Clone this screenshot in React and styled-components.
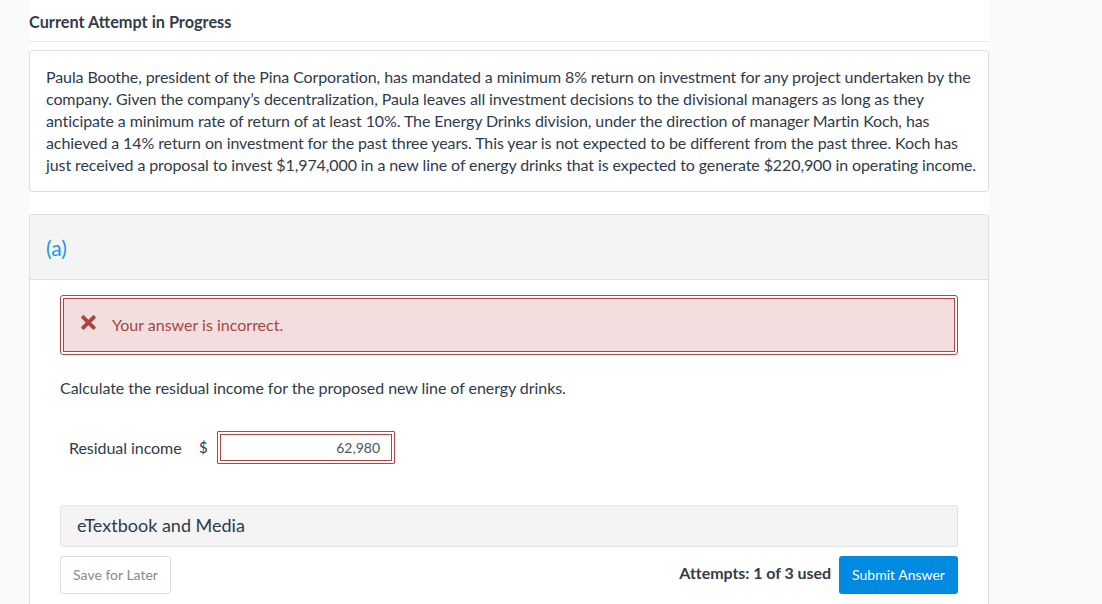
import React from "react";
import styled, { createGlobalStyle } from "styled-components";
import { FaTimes } from "react-icons/fa";

const Global = createGlobalStyle`
  html, body { margin: 0; padding: 0; background: #fafafa; height: 100%; overflow: hidden; }
  body { font-family: Lato, "Liberation Sans", sans-serif; color: #2f3b4a; }
`;

const Page = styled.div`
  width: 960px;
  height: 604px;
  margin-left: 29px;
  background: #fff;
  overflow: hidden;
`;

const Heading = styled.div`
  height: 42px;
  box-sizing: border-box;
  padding-top: 12px;
  font-size: 16.3px;
  line-height: 19px;
  font-weight: 700;
  color: #333c47;
  border-bottom: 1px solid #e8e8e8;
  margin-bottom: 8px;
`;

const Card = styled.div`
  border: 1px solid #dedede;
  border-radius: 3px;
  padding: 15px 6px 15px 16px;
  font-size: 16px;
  letter-spacing: -0.1px;
  line-height: 22px;
  color: #2f3b4a;
  height: 142px;
  box-sizing: border-box;
  margin-bottom: 22px;
`;

const Panel = styled.section`
  border: 1px solid #dedede;
  border-bottom: none;
  border-radius: 3px 3px 0 0;
  min-height: 400px;
`;

const PanelHead = styled.div`
  height: 64px;
  background: #f4f4f4;
  border-bottom: 1px solid #dedede;
  display: flex;
  align-items: center;
  padding-left: 16px;
  font-size: 21px;
  color: #1e98e6;
`;

const PanelBody = styled.div`
  padding: 15px 30px 0 30px;
`;

const Alert = styled.div`
  height: 60px;
  box-sizing: border-box;
  border: 1px solid #b04444;
  border-radius: 3px;
  padding: 2px;
  margin-bottom: 22px;
`;

const AlertInner = styled.div`
  height: 100%;
  box-sizing: border-box;
  border: 1px solid #b04444;
  background: #f2dede;
  display: flex;
  align-items: center;
  padding: 0 0 2px 14px;
  color: #a94442;
  font-size: 16px;
`;

const XIcon = styled(FaTimes)`
  color: #a94442;
  margin-right: 13px;
  margin-top: -3px;
  flex: none;
`;

const Prompt = styled.p`
  margin: 0 0 32px;
  font-size: 16px;
  letter-spacing: -0.055px;
  line-height: 22px;
  color: #2f3b4a;
`;

const AnswerRow = styled.div`
  display: flex;
  align-items: center;
  height: 33px;
  margin-bottom: 41px;
  padding-left: 9px;
  font-size: 16px;
`;

const Label = styled.span`
  width: 130px;
  flex: none;
  letter-spacing: -0.05px;
`;

const Dollar = styled.span`
  width: 18px;
  flex: none;
  margin-top: -2px;
  font-size: 15px;
`;

const Field = styled.div`
  width: 178px;
  height: 33px;
  box-sizing: border-box;
  border: 1px solid #b04444;
  border-radius: 1px;
  padding: 2px;
`;

const FieldInner = styled.div`
  height: 100%;
  box-sizing: border-box;
  border: 1px solid #b04444;
  display: flex;
  align-items: center;
  justify-content: flex-end;
  padding-right: 11px;
  font-size: 14px;
  color: #4b5561;
`;

const Media = styled.div`
  height: 42px;
  box-sizing: border-box;
  background: #f4f4f4;
  border: 1px solid #e2e2e2;
  border-radius: 3px;
  display: flex;
  align-items: center;
  padding: 0 0 2px 16px;
  font-size: 18px;
  color: #2f3b4a;
  margin-bottom: 9px;
`;

const Footer = styled.div`
  display: flex;
  align-items: center;
  justify-content: space-between;
`;

const SaveButton = styled.button`
  width: 111px;
  height: 38px;
  background: #fff;
  border: 1px solid #dedede;
  border-radius: 3px;
  font: 14px Lato, sans-serif;
  color: #8a8a8a;
  padding: 0 0 2px;
`;

const Actions = styled.div`
  display: flex;
  align-items: center;
  gap: 8px;
`;

const Attempts = styled.span`
  font-size: 16px;
  font-weight: 700;
  letter-spacing: -0.05px;
  color: #333c47;
  margin-top: -6px;
`;

const SubmitButton = styled.button`
  width: 119px;
  height: 38px;
  background: #008ae0;
  border: none;
  border-radius: 3px;
  font: 14px Lato, sans-serif;
  color: #fff;
  padding: 0 0 2px;
`;

export default function App() {
  return (
    <>
      <Global />
      <Page>
        <Heading>Current Attempt in Progress</Heading>
        <Card>
          Paula Boothe, president of the Pina Corporation, has mandated a minimum 8% return on investment for any project undertaken by the company. Given the company’s decentralization, Paula leaves all investment decisions to the divisional managers as long as they anticipate a minimum rate of return of at least 10%. The Energy Drinks division, under the direction of manager Martin Koch, has achieved a 14% return on investment for the past three years. This year is not expected to be different from the past three. Koch has just received a proposal to invest $1,974,000 in a new line of energy drinks that is expected to generate $220,900 in operating income.
        </Card>
        <Panel>
          <PanelHead>(a)</PanelHead>
          <PanelBody>
            <Alert>
              <AlertInner>
                <XIcon size={21} />
                Your answer is incorrect.
              </AlertInner>
            </Alert>
            <Prompt>Calculate the residual income for the proposed new line of energy drinks.</Prompt>
            <AnswerRow>
              <Label>Residual income</Label>
              <Dollar>$</Dollar>
              <Field><FieldInner>62,980</FieldInner></Field>
            </AnswerRow>
            <Media>eTextbook and Media</Media>
            <Footer>
              <SaveButton>Save for Later</SaveButton>
              <Actions>
                <Attempts>Attempts: 1 of 3 used</Attempts>
                <SubmitButton>Submit Answer</SubmitButton>
              </Actions>
            </Footer>
          </PanelBody>
        </Panel>
      </Page>
    </>
  );
}
